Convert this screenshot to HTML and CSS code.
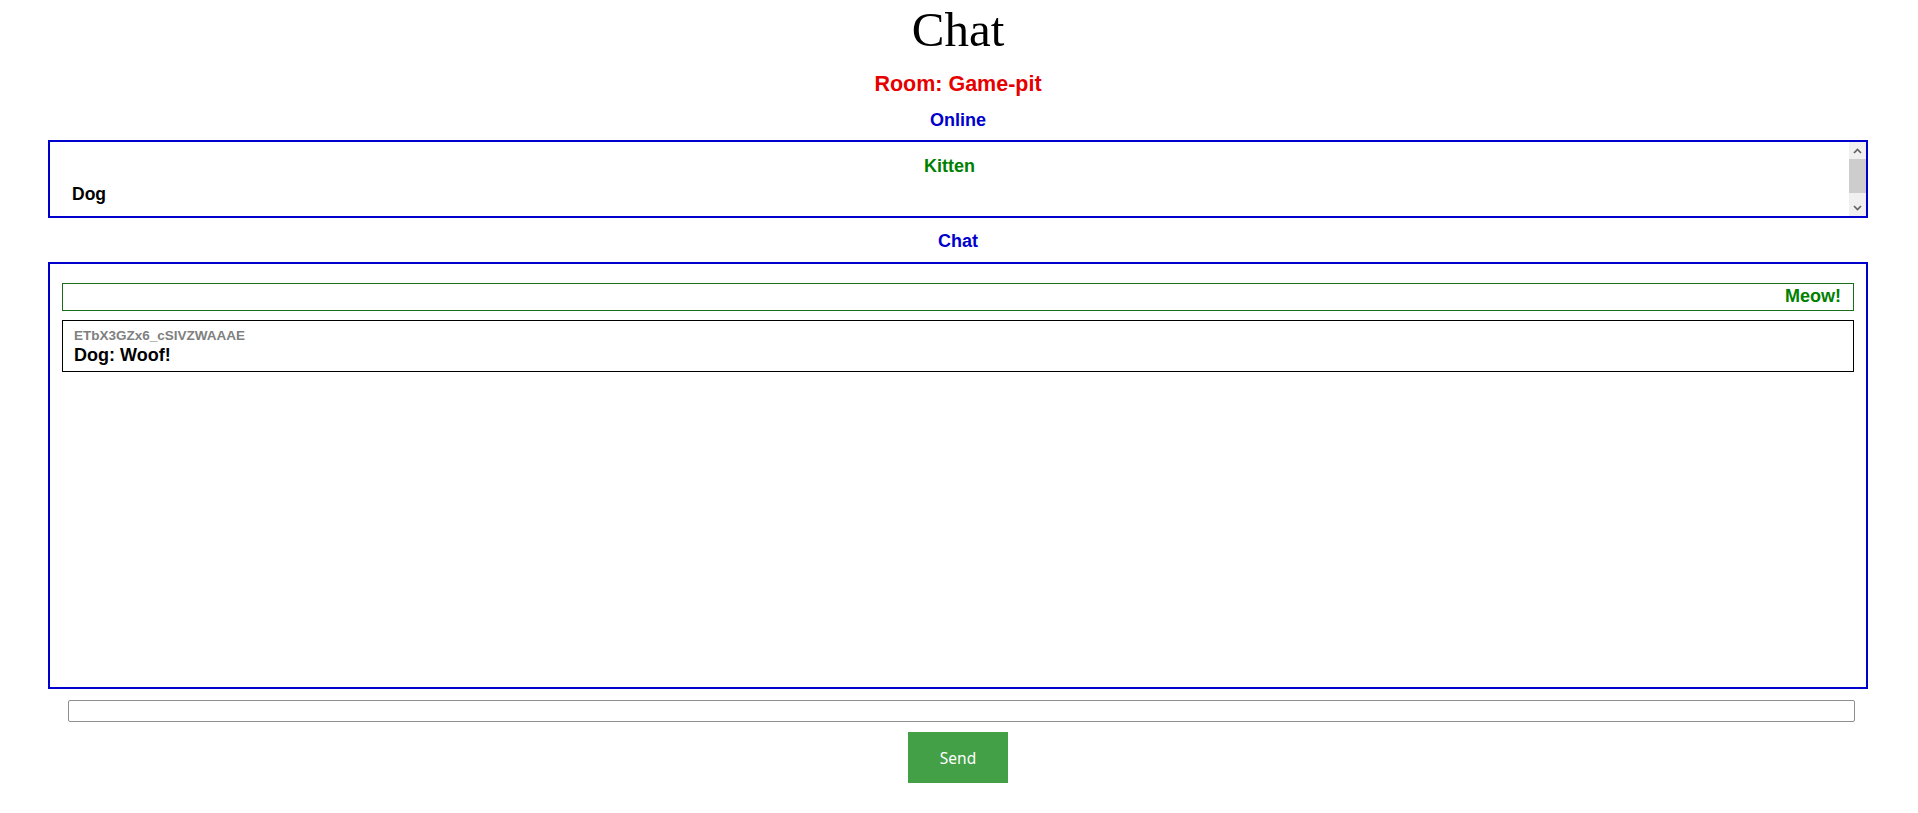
FILE: index.html
```html
<!DOCTYPE html>
<html lang="en">
<head>
<meta charset="utf-8">
<title>Chat</title>
<link rel="stylesheet" href="styles.css">
</head>
<body>
<div class="page">
  <h1 class="title">Chat</h1>
  <h2 class="room">Room: Game-pit</h2>
  <h3 class="label">Online</h3>
  <div class="online-box">
    <ul class="online-list">
      <li class="user user-self">Kitten</li>
      <li class="user">Dog</li>
    </ul>
    <div class="scrollbar">
      <span class="sb-btn">
        <svg width="9" height="6" viewBox="0 0 9 6"><path d="M1 5 L4.5 1.5 L8 5" fill="none" stroke="#606060" stroke-width="1.6"/></svg>
      </span>
      <span class="sb-track"><span class="sb-thumb"></span></span>
      <span class="sb-btn">
        <svg width="9" height="6" viewBox="0 0 9 6"><path d="M1 1 L4.5 4.5 L8 1" fill="none" stroke="#606060" stroke-width="1.6"/></svg>
      </span>
    </div>
  </div>
  <h3 class="label label-chat">Chat</h3>
  <div class="chat-box">
    <div class="msg msg-own">Meow!</div>
    <div class="msg msg-other">
      <div class="msg-id">ETbX3GZx6_cSIVZWAAAE</div>
      <div class="msg-text">Dog: Woof!</div>
    </div>
  </div>
  <form class="composer">
    <input class="composer-input" type="text">
    <button class="send-btn" type="button">Send</button>
  </form>
</div>
</body>
</html>
```

FILE: styles.css
```css
* { box-sizing: border-box; }

html, body {
  margin: 0;
  padding: 0;
  background: #ffffff;
}

body {
  font-family: "Liberation Sans", Arial, sans-serif;
  color: #000;
}

.page {
  padding: 0 50px 0 48px;
  display: flex;
  flex-direction: column;
}

.title {
  margin: 2px 0 0;
  font-family: "Liberation Serif", "Times New Roman", serif;
  font-weight: normal;
  font-size: 49px;
  line-height: 56px;
  text-align: center;
}

.room {
  margin: 14px 0 0;
  font-size: 21.5px;
  line-height: 24px;
  font-weight: bold;
  color: #e60000;
  text-align: center;
}

.label {
  margin: 14px 0 0;
  font-size: 18px;
  line-height: 20px;
  font-weight: bold;
  color: #0000cd;
  text-align: center;
}

.online-box {
  margin-top: 10px;
  height: 78px;
  border: 2px solid #0000cd;
  display: flex;
  overflow: hidden;
}

.online-list {
  flex: 1;
  list-style: none;
  margin: 0;
  padding: 10px 0 0;
}

.user {
  font-size: 17.5px;
  line-height: 28px;
  font-weight: bold;
  padding-left: 22px;
}

.user-self {
  color: #008000;
  font-size: 18px;
  text-align: center;
  padding-left: 0;
}

.scrollbar {
  width: 17px;
  background: #f0f0f0;
  display: flex;
  flex-direction: column;
}

.sb-btn {
  height: 17px;
  display: flex;
  align-items: center;
  justify-content: center;
}

.sb-track {
  flex: 1;
  display: flex;
  flex-direction: column;
}

.sb-thumb {
  height: 34px;
  background: #cdcdcd;
}

.label-chat {
  margin-top: 13px;
}

.chat-box {
  margin-top: 11px;
  height: 427px;
  border: 2px solid #0000cd;
  padding: 19px 12px;
  display: flex;
  flex-direction: column;
  gap: 9px;
}

.msg {
  border: 1px solid #000;
}

.msg-own {
  border-color: #1a6e1a;
  color: #008000;
  font-size: 18px;
  line-height: 24px;
  font-weight: bold;
  text-align: right;
  padding: 0 12px 2px;
}

.msg-other {
  padding: 6px 11px 4px;
}

.msg-id {
  font-size: 13.5px;
  line-height: 17px;
  font-weight: bold;
  color: #808080;
}

.msg-text {
  font-size: 18px;
  line-height: 23px;
  font-weight: bold;
}

.composer {
  margin: 11px 0 0;
  display: flex;
  flex-direction: column;
  align-items: center;
}

.composer-input {
  align-self: stretch;
  margin: 0 13px 0 20px;
  height: 22px;
  border: 1px solid #8f8f8f;
  border-radius: 2px;
  padding: 0 4px;
  font: 13px "Liberation Sans", Arial, sans-serif;
}

.send-btn {
  margin-top: 10px;
  width: 100px;
  height: 51px;
  border: none;
  background: #43a047;
  color: #ffffff;
  font-family: "Noto Sans", "Open Sans", sans-serif;
  font-size: 15.5px;
  cursor: pointer;
}
```
